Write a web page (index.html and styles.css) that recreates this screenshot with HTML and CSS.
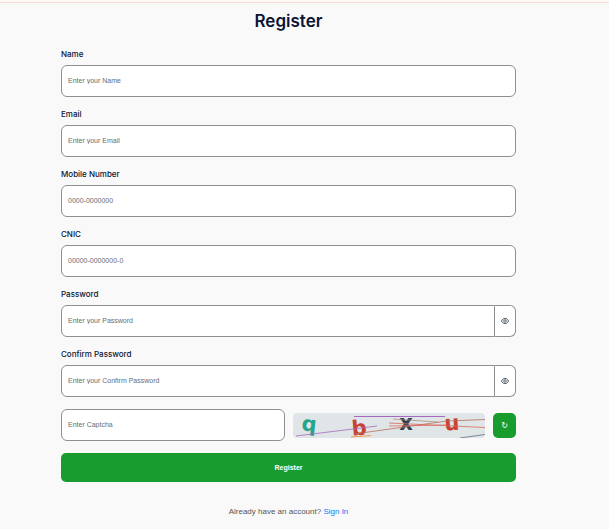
FILE: index.html
```html
<!DOCTYPE html>
<html lang="en">
<head>
    <meta charset="UTF-8">
    <meta name="viewport" content="width=device-width, initial-scale=1.0">
    <title>Register</title>
    <link rel="stylesheet" href="styles.css">
</head>
<body>
    <main class="page">
        <h1>Register</h1>
        <form class="register-form">
            <div class="field">
                <label for="name">Name</label>
                <input type="text" id="name" placeholder="Enter your Name">
            </div>
            <div class="field">
                <label for="email">Email</label>
                <input type="email" id="email" placeholder="Enter your Email">
            </div>
            <div class="field">
                <label for="mobile">Mobile Number</label>
                <input type="tel" id="mobile" placeholder="0000-0000000">
            </div>
            <div class="field">
                <label for="cnic">CNIC</label>
                <input type="text" id="cnic" placeholder="00000-0000000-0">
            </div>
            <div class="field">
                <label for="password">Password</label>
                <div class="input-group">
                    <input type="password" id="password" placeholder="Enter your Password">
                    <button type="button" class="toggle" aria-label="Show password">
                        <svg viewBox="0 0 16 16" width="8" height="8"><path d="M1 8C4 1 12 1 15 8C12 15 4 15 1 8Z"/><circle cx="8" cy="8" r="2.500"/></svg>
                    </button>
                </div>
            </div>
            <div class="field">
                <label for="confirm">Confirm Password</label>
                <div class="input-group">
                    <input type="password" id="confirm" placeholder="Enter your Confirm Password">
                    <button type="button" class="toggle" aria-label="Show confirm password">
                        <svg viewBox="0 0 16 16" width="8" height="8"><path d="M1 8C4 1 12 1 15 8C12 15 4 15 1 8Z"/><circle cx="8" cy="8" r="2.500"/></svg>
                    </button>
                </div>
            </div>
            <div class="captcha-row">
                <input type="text" id="captcha" placeholder="Enter Captcha" aria-label="Enter Captcha">
                <svg class="captcha" viewBox="0 0 192 25" role="img" aria-label="Captcha">
                    <rect width="192" height="25" fill="#e0e6e8"/>
                    <g text-anchor="middle">
                        <text x="16" y="18" fill="#27a58c" transform="rotate(6 16 14)">q</text>
                        <text x="66" y="22" fill="#c8402f" transform="rotate(-5 66 14)">b</text>
                        <text x="113" y="17" fill="#2c3e50">x</text>
                        <text x="159" y="17" fill="#c8402f" transform="rotate(-3 159 12)">u</text>
                    </g>
                    <g fill="none">
                        <path d="M61 3.500H152" stroke="#a569bd"/>
                        <path d="M3 23L84 13" stroke="#a569bd" stroke-width=".8"/>
                        <path d="M61 21L154 8L192 6.500" stroke="#b5705f" stroke-width=".8"/>
                        <path d="M96 10L192 14.500" stroke="#d9685a" stroke-width=".8"/>
                        <path d="M96 13L153 12" stroke="#d9685a" stroke-width=".8"/>
                        <path d="M100 6L145 9" stroke="#a78378" stroke-width=".7"/>
                        <path d="M58 24L78 22.500" stroke="#f39c4a"/>
                        <path d="M167 25L192 21.500" stroke="#5d6d7e" stroke-width=".8"/>
                    </g>
                </svg>
                <button type="button" class="refresh" aria-label="Refresh captcha">↻</button>
            </div>
            <button type="submit" class="submit">Register</button>
        </form>
        <p class="signin">Already have an account? <a href="#">Sign In</a></p>
    </main>
</body>
</html>
```
FILE: styles.css
```css
* { box-sizing: border-box; }
body { margin: 0; background: #f9f9f9; color: #0b1433; font-family: "Liberation Sans", Arial, sans-serif; border-top: 2px solid #fff8f5; }
.page { border-top: 1px solid #fbdcd5; padding: 6px 93px 12px 61px; }
h1 { margin: 0 0 15px; font-family: Inter, sans-serif; font-size: 17px; line-height: 24px; font-weight: 600; text-align: center; }
.register-form { display: flex; flex-direction: column; gap: 11px; }
.field { display: flex; flex-direction: column; gap: 5px; }
label { font-family: Inter, sans-serif; font-size: 8px; line-height: 12px; font-weight: 500; }
input { width: 100%; min-width: 0; height: 32px; padding: 0 6px 1px; border: 1px solid #8f8f8f; border-radius: 6px; background: #fff; color: #333; font-family: inherit; font-size: 7px; }
input::placeholder { color: #666d75; opacity: 1; }
button { padding: 0; border: none; background: #189c2d; color: #fff; font-family: inherit; cursor: pointer; }
.input-group { display: flex; }
.input-group input { flex: 1; border-radius: 6px 0 0 6px; }
.toggle { display: flex; align-items: center; justify-content: center; width: 21px; border: 1px solid #8f8f8f; border-left: none; border-radius: 0 6px 6px 0; background: #fff; }
.toggle svg { fill: none; stroke: #59636d; stroke-width: 2; }
.captcha-row { display: flex; align-items: center; gap: 8px; margin-top: 1px; }
.captcha-row input { flex: 1; }
.captcha { flex: none; width: 192px; height: 25px; border-radius: 4px; font-family: "DejaVu Sans", sans-serif; font-size: 21px; font-weight: bold; }
.refresh { width: 23px; height: 25px; border-radius: 5px; font-family: "DejaVu Sans", sans-serif; font-size: 8px; }
.submit { height: 29px; margin-top: 1px; border-radius: 5px; font-size: 7px; font-weight: bold; }
.signin { margin: 24px 0 0; font-size: 8px; line-height: 12px; text-align: center; color: #555; }
.signin a { color: #1677ff; text-decoration: none; }
```
